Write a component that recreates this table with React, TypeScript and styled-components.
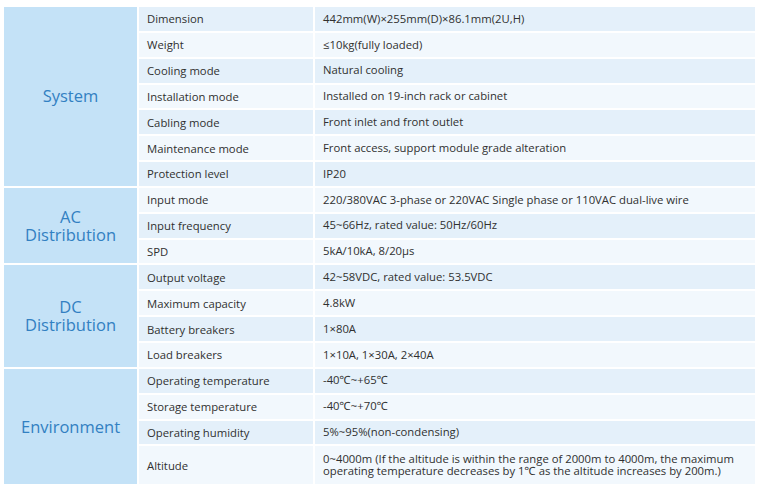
import React from 'react'
import styled, { createGlobalStyle } from 'styled-components'

const GlobalStyle = createGlobalStyle`
  html, body {
    margin: 0;
    padding: 0;
    background: #ffffff;
  }
  body {
    font-family: 'Open Sans', 'Noto Sans', sans-serif;
    color: #303030;
  }
`

const Page = styled.div`
  padding: 5px 3px 0 2px;
`

const SpecTable = styled.table`
  border-collapse: separate;
  border-spacing: 2px;
  table-layout: fixed;
  width: 755px;
  font-size: 11.3px;
`

const GroupCell = styled.th`
  width: 133px;
  background: #c4e2f7;
  color: #3280c2;
  font-size: 16.5px;
  font-weight: 400;
  line-height: 18px;
  text-align: center;
  vertical-align: middle;
  padding: 0;
`

const LabelCell = styled.td<{ $alt: boolean }>`
  width: 158px;
  height: 23.85px;
  padding: 0 8px;
  background: ${({ $alt }) => ($alt ? '#f2f8fd' : '#e4f0fa')};
  vertical-align: middle;
  white-space: nowrap;
`

const ValueCell = styled.td<{ $alt: boolean }>`
  padding: 0 8px;
  background: ${({ $alt }) => ($alt ? '#f2f8fd' : '#e4f0fa')};
  vertical-align: middle;
  line-height: 12.5px;
`

const TallRow = styled.tr`
  td {
    height: 38px;
  }
`

type Spec = { label: string; value: string; tall?: boolean }
type Group = { name: string[]; specs: Spec[] }

const groups: Group[] = [
  {
    name: ['System'],
    specs: [
      { label: 'Dimension', value: '442mm(W)×255mm(D)×86.1mm(2U,H)' },
      { label: 'Weight', value: '≤10kg(fully loaded)' },
      { label: 'Cooling mode', value: 'Natural cooling' },
      { label: 'Installation mode', value: 'Installed on 19-inch rack or cabinet' },
      { label: 'Cabling mode', value: 'Front inlet and front outlet' },
      { label: 'Maintenance mode', value: 'Front access, support module grade alteration' },
      { label: 'Protection level', value: 'IP20' },
    ],
  },
  {
    name: ['AC', 'Distribution'],
    specs: [
      { label: 'Input mode', value: '220/380VAC 3-phase or 220VAC Single phase or 110VAC dual-live wire' },
      { label: 'Input frequency', value: '45~66Hz, rated value: 50Hz/60Hz' },
      { label: 'SPD', value: '5kA/10kA, 8/20μs' },
    ],
  },
  {
    name: ['DC', 'Distribution'],
    specs: [
      { label: 'Output voltage', value: '42~58VDC, rated value: 53.5VDC' },
      { label: 'Maximum capacity', value: '4.8kW' },
      { label: 'Battery breakers', value: '1×80A' },
      { label: 'Load breakers', value: '1×10A, 1×30A, 2×40A' },
    ],
  },
  {
    name: ['Environment'],
    specs: [
      { label: 'Operating temperature', value: '-40℃~+65℃' },
      { label: 'Storage temperature', value: '-40℃~+70℃' },
      { label: 'Operating humidity', value: '5%~95%(non-condensing)' },
      {
        label: 'Altitude',
        value:
          '0~4000m (If the altitude is within the range of 2000m to 4000m, the maximum operating temperature decreases by 1℃ as the altitude increases by 200m.)',
        tall: true,
      },
    ],
  },
]

export default function App() {
  let index = 0
  return (
    <Page>
      <GlobalStyle />
      <SpecTable>
        <tbody>
          {groups.map((group) =>
            group.specs.map((spec, i) => {
              const alt = index++ % 2 === 1
              const Row = spec.tall ? TallRow : 'tr'
              return (
                <Row key={spec.label}>
                  {i === 0 && (
                    <GroupCell rowSpan={group.specs.length}>
                      {group.name.map((line) => (
                        <div key={line}>{line}</div>
                      ))}
                    </GroupCell>
                  )}
                  <LabelCell $alt={alt}>{spec.label}</LabelCell>
                  <ValueCell $alt={alt}>{spec.value}</ValueCell>
                </Row>
              )
            })
          )}
        </tbody>
      </SpecTable>
    </Page>
  )
}
